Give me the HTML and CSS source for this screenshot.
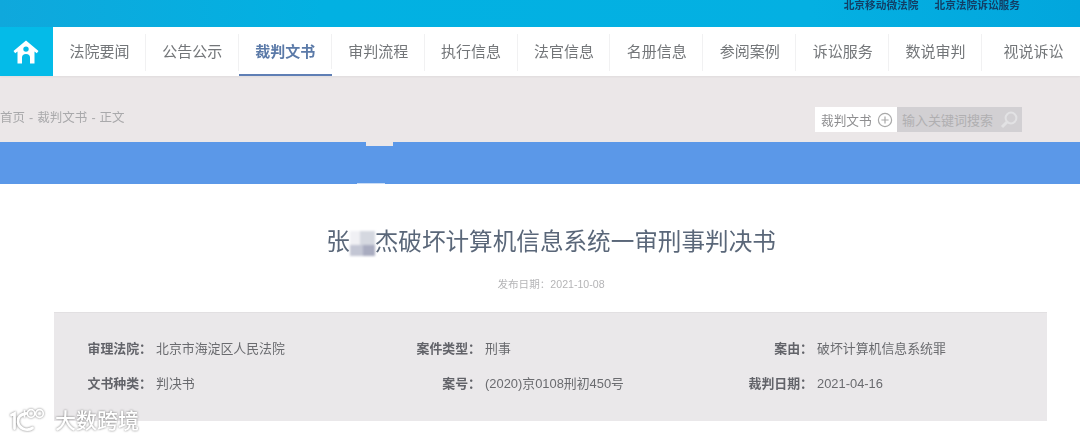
FILE: index.html
```html
<!DOCTYPE html>
<html lang="zh-CN">
<head>
<meta charset="utf-8">
<title>裁判文书</title>
<link rel="stylesheet" href="styles.css">
</head>
<body>
<div class="page">
  <header class="topbar">
    <a class="toplink">北京移动微法院</a>
    <a class="toplink">北京法院诉讼服务</a>
  </header>
  <nav class="nav">
    <a class="home">
      <svg width="26" height="24" viewBox="0 0 26 24"><path fill="#fff" fill-rule="evenodd" d="M13 0.5 L25.5 11 L23.8 13.2 L21.5 11.6 V23.5 H17 V17.5 A4 3.6 0 0 0 9 17.5 V23.5 H4.5 V11.6 L2.2 13.2 L0.5 11 Z M13 6.4 A2.7 2.7 0 1 0 13 11.8 A2.7 2.7 0 1 0 13 6.4 Z"/></svg>
    </a>
    <a class="nav-item">法院要闻</a>
    <a class="nav-item">公告公示</a>
    <a class="nav-item active">裁判文书</a>
    <a class="nav-item">审判流程</a>
    <a class="nav-item">执行信息</a>
    <a class="nav-item">法官信息</a>
    <a class="nav-item">名册信息</a>
    <a class="nav-item">参阅案例</a>
    <a class="nav-item">诉讼服务</a>
    <a class="nav-item">数说审判</a>
    <a class="nav-item last">视说诉讼</a>
  </nav>
  <section class="crumbbar">
    <div class="crumbs">首页 - 裁判文书 - 正文</div>
    <div class="search">
      <div class="search-type">裁判文书
        <svg width="16" height="16" viewBox="0 0 16 16"><circle cx="8" cy="8" r="6.6" fill="none" stroke="#a9a9a9" stroke-width="1.2"/><path d="M8 4.4V11.6M4.4 8H11.6" stroke="#a9a9a9" stroke-width="1.2"/></svg>
      </div>
      <div class="search-input">输入关键词搜索
        <svg width="20" height="20" viewBox="0 0 20 20"><circle cx="12" cy="8" r="5.4" fill="none" stroke="#e2e2e4" stroke-width="2"/><path d="M8 12 3 17" stroke="#e2e2e4" stroke-width="3"/></svg>
      </div>
    </div>
  </section>
  <div class="band"></div>
  <main class="article">
    <h1 class="title">张<span class="mosaic"></span>杰破坏计算机信息系统一审刑事判决书</h1>
    <p class="date">发布日期：2021-10-08</p>
    <section class="info">
      <span class="label">审理法院：</span><span class="value">北京市海淀区人民法院</span>
      <span class="label">案件类型：</span><span class="value">刑事</span>
      <span class="label">案由：</span><span class="value">破坏计算机信息系统罪</span>
      <span class="label">文书种类：</span><span class="value">判决书</span>
      <span class="label">案号：</span><span class="value">(2020)京0108刑初450号</span>
      <span class="label">裁判日期：</span><span class="value">2021-04-16</span>
    </section>
  </main>
  <div class="watermark">
    <svg width="44" height="28" viewBox="0 0 44 28"><g fill="none" stroke="#fff" stroke-linecap="round"><path stroke-width="2.8" d="M2.5 8 L5.5 6.5 V21.5"/><path stroke-width="2.8" d="M17 6.5 C11 7.5 8.5 11 9 15 C10 22 18 24.5 23.5 21"/><path stroke-width="1.6" d="M15.5 3.5 V10"/><circle cx="22" cy="6.5" r="3.8" stroke-width="1.7"/><circle cx="30.5" cy="6.5" r="3.8" stroke-width="1.7"/></g></svg>
    <span class="wm-text">大数跨境</span>
  </div>
</div>
</body>
</html>
```
FILE: styles.css
```css
* { box-sizing: border-box; }
html, body { margin: 0; padding: 0; }
body {
  background: #fff;
  font-family: "Liberation Sans", "Noto Sans CJK SC", sans-serif;
  color: #666;
}
.page {
  position: relative;
  width: 1080px;
  height: 441px;
  overflow: hidden;
  filter: blur(0.35px);
}
.topbar {
  height: 27px;
  background: linear-gradient(90deg, #0fa8dc 0%, #02b1e2 30%, #04b0e2 75%, #02a6dd 100%);
  display: flex;
  justify-content: flex-end;
  gap: 16px;
  padding: 0 60px 0 0;
}
.toplink {
  font-size: 10.7px;
  line-height: 11px;
  font-weight: 700;
  color: #123f66;
  white-space: nowrap;
}
.nav {
  display: flex;
  height: 49px;
  background: #fff;
  box-shadow: 0 1px 2px rgba(0,0,0,.05);
  position: relative;
}
.home {
  width: 53px;
  background: #04bbe8;
  display: flex;
  align-items: center;
  justify-content: center;
}
.nav-item {
  position: relative;
  width: 92.95px;
  font-size: 15px;
  line-height: 49px;
  text-align: center;
  color: #737679;
  white-space: nowrap;
}
.nav-item::after {
  content: "";
  position: absolute;
  right: 0;
  top: 7px;
  bottom: 5px;
  width: 1px;
  background: #f1f1f2;
}
.nav-item.last::after { display: none; }
.nav-item.last { width: 98px; padding-left: 5px; }
.nav-item.active {
  color: #5b7aa8;
  font-weight: 700;
  border-bottom: 2px solid #5f7fb5;
}
.crumbbar {
  height: 66px;
  background: #ebe7e8;
  display: flex;
  align-items: flex-start;
  justify-content: space-between;
  padding: 31px 58px 0 0;
}
.crumbs {
  font-size: 12.5px;
  line-height: 22px;
  color: #a9a9ab;
  white-space: nowrap;
  word-spacing: .6px;
}
.search { display: flex; height: 25px; }
.search-type {
  width: 82px;
  background: #fff;
  font-size: 12.7px;
  color: #8e8e90;
  display: flex;
  align-items: center;
  gap: 5px;
  padding-left: 6px;
  white-space: nowrap;
}
.search-input {
  width: 125px;
  background: #d2d0d3;
  font-size: 13px;
  color: #b0afb1;
  display: flex;
  align-items: center;
  justify-content: space-between;
  padding: 0 3px 0 5px;
  white-space: nowrap;
}
.band {
  position: relative;
  height: 42px;
  background: #5b98e8;
}
.band::before {
  content: "";
  position: absolute;
  left: 366px;
  top: 0;
  width: 27px;
  height: 4px;
  background: #ebe7e8;
  filter: blur(.7px);
}
.band::after {
  content: "";
  position: absolute;
  left: 357px;
  bottom: 0;
  width: 28px;
  height: 1px;
  background: #c8dcf6;
}
.article { padding: 40px 54px 0 54px; }
.title {
  margin: 0;
  height: 36px;
  font-size: 23.6px;
  line-height: 36px;
  font-weight: 400;
  color: #5a6779;
  text-align: center;
  white-space: nowrap;
  padding-left: 22px;
}
.mosaic {
  display: inline-block;
  width: 25px;
  height: 25px;
  vertical-align: -6px;
  filter: blur(0.8px);
  background:
    linear-gradient(#a9acc0, #a9acc0) 13px 14px / 12px 11px no-repeat,
    linear-gradient(#c3c6d4, #c3c6d4) 0 14px / 13px 11px no-repeat,
    linear-gradient(#d5d8e0, #d5d8e0) 10px 0 / 15px 14px no-repeat,
    linear-gradient(#f0f0f4, #f0f0f4) 0 0 / 10px 14px no-repeat;
}
.date {
  margin: 16px 0 0;
  font-size: 10.6px;
  line-height: 16px;
  color: #b5b5b7;
  text-align: center;
  padding-left: 22px;
}
.info {
  margin: 20px 0 0;
  height: 109px;
  width: 993px;
  background: #eae8ea;
  border-top: 1px solid #e2e0e2;
  display: grid;
  grid-template-columns: 98px 231px 98px 234px 98px 1fr;
  grid-template-rows: 35px 35px;
  padding-top: 18px;
  align-items: center;
  font-size: 12.9px;
  line-height: 18px;
}
.label {
  text-align: right;
  color: #626369;
  font-weight: 700;
  white-space: nowrap;
}
.value {
  padding-left: 4px;
  color: #6a6b6f;
  white-space: nowrap;
}
.watermark {
  position: absolute;
  left: 9px;
  bottom: 6px;
  display: flex;
  align-items: center;
  filter: drop-shadow(0 0 1px rgba(90,90,90,.8));
}
.wm-text {
  font-size: 21px;
  line-height: 28px;
  font-weight: 500;
  color: #fff;
  white-space: nowrap;
  margin-left: 2px;
}
```
